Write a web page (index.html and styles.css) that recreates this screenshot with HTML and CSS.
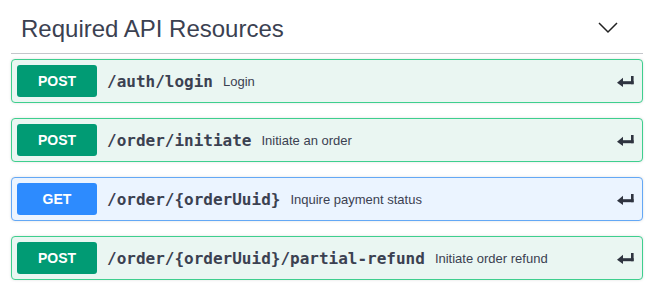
FILE: index.html
```html
<!DOCTYPE html>
<html>
<head>
<meta charset="utf-8">
<link rel="stylesheet" href="styles.css">
</head>
<body>
<div class="section">
  <h3 class="tag">
    <span class="tag-title">Required API Resources</span>
    <svg class="chevron" width="20" height="20" viewBox="0 0 20 20"><polyline points="1,4 10,13 19,4" fill="none" stroke="#222" stroke-width="1.5"/></svg>
  </h3>

  <div class="opblock post">
    <span class="method">POST</span>
    <span class="path">/auth/login</span>
    <span class="desc">Login</span>
    <svg class="ret" width="17" height="11" viewBox="0 0 17 11"><rect x="14" y="0" width="2.6" height="8.2" fill="#2f3440"/><rect x="5" y="5.2" width="11.6" height="3" fill="#2f3440"/><path d="M0 6.7 L6 1.8 L6 11 Z" fill="#2f3440"/></svg>
  </div>

  <div class="opblock post">
    <span class="method">POST</span>
    <span class="path">/order/initiate</span>
    <span class="desc">Initiate an order</span>
    <svg class="ret" width="17" height="11" viewBox="0 0 17 11"><rect x="14" y="0" width="2.6" height="8.2" fill="#2f3440"/><rect x="5" y="5.2" width="11.6" height="3" fill="#2f3440"/><path d="M0 6.7 L6 1.8 L6 11 Z" fill="#2f3440"/></svg>
  </div>

  <div class="opblock get">
    <span class="method">GET</span>
    <span class="path">/order/{orderUuid}</span>
    <span class="desc">Inquire payment status</span>
    <svg class="ret" width="17" height="11" viewBox="0 0 17 11"><rect x="14" y="0" width="2.6" height="8.2" fill="#2f3440"/><rect x="5" y="5.2" width="11.6" height="3" fill="#2f3440"/><path d="M0 6.7 L6 1.8 L6 11 Z" fill="#2f3440"/></svg>
  </div>

  <div class="opblock post">
    <span class="method">POST</span>
    <span class="path">/order/{orderUuid}/partial-refund</span>
    <span class="desc">Initiate order refund</span>
    <svg class="ret" width="17" height="11" viewBox="0 0 17 11"><rect x="14" y="0" width="2.6" height="8.2" fill="#2f3440"/><rect x="5" y="5.2" width="11.6" height="3" fill="#2f3440"/><path d="M0 6.7 L6 1.8 L6 11 Z" fill="#2f3440"/></svg>
  </div>
</div>
</body>
</html>
```

FILE: styles.css
```css
html, body {
  margin: 0;
  padding: 0;
  background: #ffffff;
}

body {
  font-family: "Liberation Sans", Arial, sans-serif;
  color: #3b4151;
}

.section {
  width: 632px;
  margin-left: 11px;
}

.tag {
  display: flex;
  align-items: center;
  justify-content: space-between;
  margin: 0 0 5px 0;
  padding: 15px 25px 10px 10px;
  border-bottom: 1px solid #c4c6cb;
  font-size: 24px;
  line-height: 28px;
  font-weight: normal;
  color: #3b4151;
}

.chevron {
  display: block;
}

.opblock {
  display: flex;
  align-items: center;
  margin: 0 0 15px 0;
  padding: 5px;
  border: 1px solid;
  border-radius: 4px;
  box-shadow: 0 0 3px rgba(0, 0, 0, 0.12);
}

.opblock.post {
  border-color: #3ecf8e;
  background: #eaf6f2;
}

.opblock.get {
  border-color: #64a8f5;
  background: #ebf4ff;
}

.method {
  flex: none;
  width: 80px;
  height: 32px;
  line-height: 32px;
  border-radius: 3px;
  text-align: center;
  font-size: 14px;
  font-weight: bold;
  color: #ffffff;
}

.post .method {
  background: #019b74;
}

.get .method {
  background: #2d8bfe;
}

.path {
  padding: 0 10px;
  font-family: "DejaVu Sans Mono", monospace;
  font-weight: bold;
  font-size: 16px;
  color: #3b4151;
}

.desc {
  flex: 1;
  font-size: 13px;
  color: #3b4151;
}

.ret {
  flex: none;
  display: block;
  margin-right: 3px;
}
```
